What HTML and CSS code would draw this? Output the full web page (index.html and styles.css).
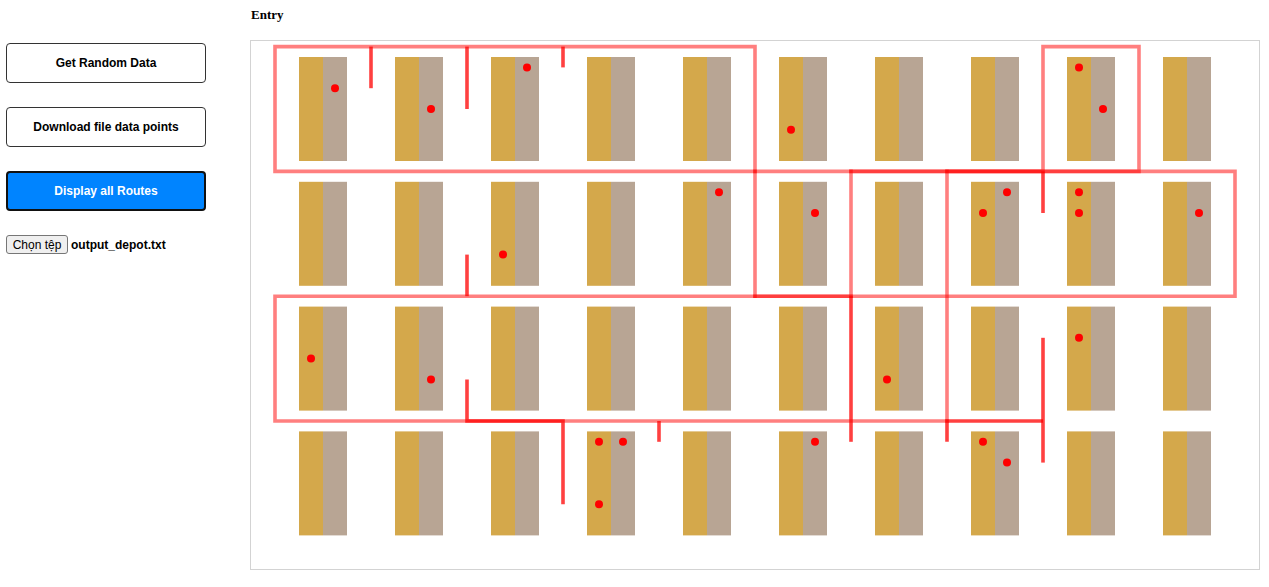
FILE: index.html
```html
<!DOCTYPE html>
<html lang="en">
<head>
  <meta charset="UTF-8">
  <meta name="viewport" content="width=device-width, initial-scale=1.0">
  <title>Warehouse Routes</title>
  <link rel="stylesheet" href="styles.css">
</head>
<body>
  <aside class="sidebar">
    <button class="action-btn">Get Random Data</button>
    <button class="action-btn">Download file data points</button>
    <button class="action-btn action-btn-active">Display all Routes</button>
    <div class="file-row">
      <button class="file-btn">Chọn tệp</button>
      <span class="file-name">output_depot.txt</span>
    </div>
  </aside>

  <main class="content">
    <h1 class="entry-label">Entry</h1>
    <div class="map-box">
      <svg class="map" width="1008" height="528" viewBox="251 41 1008 528">
        <defs>
          <g id="rack">
            <rect class="rack-left" width="24" height="104"></rect>
            <rect class="rack-right" x="24" width="24" height="104"></rect>
          </g>
        </defs>

        <!-- racks -->
        <g>
          <use href="#rack" x="299" y="57"></use>
          <use href="#rack" x="395" y="57"></use>
          <use href="#rack" x="491" y="57"></use>
          <use href="#rack" x="587" y="57"></use>
          <use href="#rack" x="683" y="57"></use>
          <use href="#rack" x="779" y="57"></use>
          <use href="#rack" x="875" y="57"></use>
          <use href="#rack" x="971" y="57"></use>
          <use href="#rack" x="1067" y="57"></use>
          <use href="#rack" x="1163" y="57"></use>
        </g>
        <g>
          <use href="#rack" x="299" y="181.8"></use>
          <use href="#rack" x="395" y="181.8"></use>
          <use href="#rack" x="491" y="181.8"></use>
          <use href="#rack" x="587" y="181.8"></use>
          <use href="#rack" x="683" y="181.8"></use>
          <use href="#rack" x="779" y="181.8"></use>
          <use href="#rack" x="875" y="181.8"></use>
          <use href="#rack" x="971" y="181.8"></use>
          <use href="#rack" x="1067" y="181.8"></use>
          <use href="#rack" x="1163" y="181.8"></use>
        </g>
        <g>
          <use href="#rack" x="299" y="306.6"></use>
          <use href="#rack" x="395" y="306.6"></use>
          <use href="#rack" x="491" y="306.6"></use>
          <use href="#rack" x="587" y="306.6"></use>
          <use href="#rack" x="683" y="306.6"></use>
          <use href="#rack" x="779" y="306.6"></use>
          <use href="#rack" x="875" y="306.6"></use>
          <use href="#rack" x="971" y="306.6"></use>
          <use href="#rack" x="1067" y="306.6"></use>
          <use href="#rack" x="1163" y="306.6"></use>
        </g>
        <g>
          <use href="#rack" x="299" y="431.4"></use>
          <use href="#rack" x="395" y="431.4"></use>
          <use href="#rack" x="491" y="431.4"></use>
          <use href="#rack" x="587" y="431.4"></use>
          <use href="#rack" x="683" y="431.4"></use>
          <use href="#rack" x="779" y="431.4"></use>
          <use href="#rack" x="875" y="431.4"></use>
          <use href="#rack" x="971" y="431.4"></use>
          <use href="#rack" x="1067" y="431.4"></use>
          <use href="#rack" x="1163" y="431.4"></use>
        </g>

        <!-- routes, one path per loop -->
        <path class="route" d="M275 46.6H755V171.4H275Z"></path>
        <path class="route" d="M755 171.4V296.2"></path>
        <path class="route" d="M755 171.4H851V296.2H755"></path>
        <path class="route" d="M851 171.4H1235V296.2H851"></path>
        <path class="route" d="M947 171.4V421"></path>
        <path class="route" d="M851 171.4H1043"></path>
        <path class="route" d="M1043 171.4V46.6H1139V171.4H947"></path>
        <path class="route" d="M851 296.2H275V421H947"></path>

        <!-- spurs into an aisle and back -->
        <path class="spur" d="M371 46.6V88.2"></path>
        <path class="spur" d="M467 46.6V109"></path>
        <path class="spur" d="M563 46.6V67.4"></path>
        <path class="spur" d="M1043 171.4V213"></path>
        <path class="spur" d="M467 296.2V254.6"></path>
        <path class="spur" d="M851 296.2V441.8"></path>
        <path class="spur" d="M467 379.4V421H563V504.2"></path>
        <path class="spur" d="M659 421V441.8"></path>
        <path class="spur" d="M947 441.8V421H1043"></path>
        <path class="spur" d="M1043 337.8V462.6"></path>

        <!-- picking points -->
        <circle class="dot" cx="335" cy="88.2" r="4"></circle>
        <circle class="dot" cx="431" cy="109" r="4"></circle>
        <circle class="dot" cx="527" cy="67.4" r="4"></circle>
        <circle class="dot" cx="791" cy="129.8" r="4"></circle>
        <circle class="dot" cx="1079" cy="67.4" r="4"></circle>
        <circle class="dot" cx="1103" cy="109" r="4"></circle>
        <circle class="dot" cx="719" cy="192.2" r="4"></circle>
        <circle class="dot" cx="815" cy="213" r="4"></circle>
        <circle class="dot" cx="503" cy="254.6" r="4"></circle>
        <circle class="dot" cx="983" cy="213" r="4"></circle>
        <circle class="dot" cx="1007" cy="192.2" r="4"></circle>
        <circle class="dot" cx="1079" cy="192.2" r="4"></circle>
        <circle class="dot" cx="1079" cy="213" r="4"></circle>
        <circle class="dot" cx="1199" cy="213" r="4"></circle>
        <circle class="dot" cx="311" cy="358.6" r="4"></circle>
        <circle class="dot" cx="431" cy="379.4" r="4"></circle>
        <circle class="dot" cx="887" cy="379.4" r="4"></circle>
        <circle class="dot" cx="1079" cy="337.8" r="4"></circle>
        <circle class="dot" cx="599" cy="441.8" r="4"></circle>
        <circle class="dot" cx="623" cy="441.8" r="4"></circle>
        <circle class="dot" cx="599" cy="504.2" r="4"></circle>
        <circle class="dot" cx="815" cy="441.8" r="4"></circle>
        <circle class="dot" cx="983" cy="441.8" r="4"></circle>
        <circle class="dot" cx="1007" cy="462.6" r="4"></circle>
      </svg>
    </div>
  </main>
</body>
</html>
```

FILE: styles.css
```css
body {
  margin: 0;
  display: flex;
  background-color: white;
  font-family: "Liberation Sans", Arial, sans-serif;
}

.sidebar {
  width: 250px;
  box-sizing: border-box;
  padding: 43px 0 0 6px;
  display: flex;
  flex-direction: column;
  gap: 24px;
}

.action-btn {
  width: 200px;
  height: 40px;
  background-color: white;
  color: black;
  border: 1px solid #333;
  border-radius: 4px;
  font-family: inherit;
  font-size: 12px;
  font-weight: bold;
}

.action-btn-active {
  background-color: #0084ff;
  color: white;
  border: 2px solid #111;
}

.file-row {
  display: flex;
  align-items: center;
  gap: 3px;
}

.file-btn {
  width: 62px;
  height: 19px;
  padding: 0;
  background-color: #efefef;
  color: black;
  border: 1px solid #767676;
  border-radius: 3px;
  font-family: inherit;
  font-size: 12px;
}

.file-name {
  font-size: 12px;
  font-weight: bold;
}

.content {
  display: flex;
  flex-direction: column;
}

.entry-label {
  margin: 0;
  height: 40px;
  box-sizing: border-box;
  padding: 7px 0 0 1px;
  font-family: "Liberation Serif", "Times New Roman", serif;
  font-size: 13px;
  line-height: 15px;
  font-weight: bold;
}

.map-box {
  width: 1008px;
  height: 528px;
  border: 1px solid #d3d3d3;
}

.map {
  display: block;
}

.rack-left {
  fill: #d4a84b;
}

.rack-right {
  fill: #b8a594;
}

.route,
.spur {
  fill: none;
  stroke: red;
  stroke-width: 3.6;
  stroke-linecap: square;
  stroke-linejoin: miter;
}

.route {
  stroke-opacity: 0.5;
}

.spur {
  stroke-linecap: butt;
  stroke-opacity: 0.75;
}

.dot {
  fill: red;
}
```
